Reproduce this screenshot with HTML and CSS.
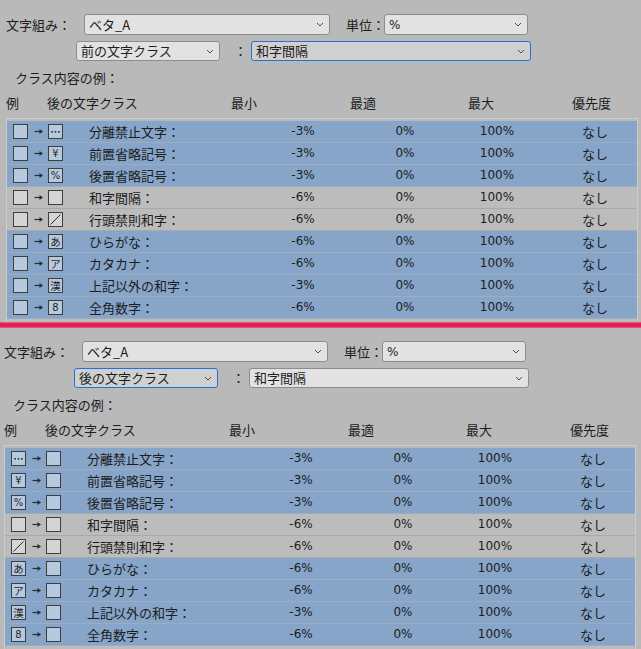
FILE: index.html
```html
<!DOCTYPE html>
<html lang="ja">
<head>
<meta charset="utf-8">
<link rel="stylesheet" href="styles.css">
</head>
<body>
<div class="panel panel-a">
  <div class="inner">
    <div class="form-row r1">
      <span class="lbl lbl-kumi">文字組み：</span>
      <div class="select s-kumi"><span>ベタ_A</span><svg class="chev" width="8" height="5" viewBox="0 0 8 5"><polyline points="1,1 4,4 7,1"/></svg></div>
      <span class="lbl lbl-unit">単位：</span>
      <div class="select s-unit"><span class="latin">%</span><svg class="chev" width="8" height="5" viewBox="0 0 8 5"><polyline points="1,1 4,4 7,1"/></svg></div>
    </div>
    <div class="form-row r2">
      <div class="select s-class"><span>前の文字クラス</span><svg class="chev" width="8" height="5" viewBox="0 0 8 5"><polyline points="1,1 4,4 7,1"/></svg></div>
      <span class="colon">：</span>
      <div class="select s-target focus"><span>和字間隔</span><svg class="chev" width="8" height="5" viewBox="0 0 8 5"><polyline points="1,1 4,4 7,1"/></svg></div>
    </div>
    <div class="caption">クラス内容の例：</div>
    <div class="thead">
      <span class="h h1">例</span><span class="h h2">後の文字クラス</span><span class="h h3">最小</span><span class="h h4">最適</span><span class="h h5">最大</span><span class="h h6">優先度</span>
    </div>
    <div class="table">
      <div class="row sel"><div class="ex"><span class="box"></span><svg class="arr" width="9" height="7" viewBox="0 0 9 7"><path d="M0.5 3.5H6"/><polygon points="5.5,1 9,3.5 5.5,6"/></svg><span class="box"><svg width="13" height="13" viewBox="0 0 13 13"><rect x="2.3" y="6" width="1.6" height="1.6"/><rect x="5.7" y="6" width="1.6" height="1.6"/><rect x="9.1" y="6" width="1.6" height="1.6"/></svg></span></div><span class="name">分離禁止文字：</span><span class="v min">-3%</span><span class="v opt">0%</span><span class="v max">100%</span><span class="v prio">なし</span></div>
      <div class="row sel"><div class="ex"><span class="box"></span><svg class="arr" width="9" height="7" viewBox="0 0 9 7"><path d="M0.5 3.5H6"/><polygon points="5.5,1 9,3.5 5.5,6"/></svg><span class="box g latin">¥</span></div><span class="name">前置省略記号：</span><span class="v min">-3%</span><span class="v opt">0%</span><span class="v max">100%</span><span class="v prio">なし</span></div>
      <div class="row sel"><div class="ex"><span class="box"></span><svg class="arr" width="9" height="7" viewBox="0 0 9 7"><path d="M0.5 3.5H6"/><polygon points="5.5,1 9,3.5 5.5,6"/></svg><span class="box g latin">%</span></div><span class="name">後置省略記号：</span><span class="v min">-3%</span><span class="v opt">0%</span><span class="v max">100%</span><span class="v prio">なし</span></div>
      <div class="row"><div class="ex"><span class="box"></span><svg class="arr" width="9" height="7" viewBox="0 0 9 7"><path d="M0.5 3.5H6"/><polygon points="5.5,1 9,3.5 5.5,6"/></svg><span class="box"></span></div><span class="name">和字間隔：</span><span class="v min">-6%</span><span class="v opt">0%</span><span class="v max">100%</span><span class="v prio">なし</span></div>
      <div class="row"><div class="ex"><span class="box"></span><svg class="arr" width="9" height="7" viewBox="0 0 9 7"><path d="M0.5 3.5H6"/><polygon points="5.5,1 9,3.5 5.5,6"/></svg><span class="box"><svg width="13" height="13" viewBox="0 0 13 13"><line class="sl" x1="1.5" y1="11.5" x2="11.5" y2="1.5"/></svg></span></div><span class="name">行頭禁則和字：</span><span class="v min">-6%</span><span class="v opt">0%</span><span class="v max">100%</span><span class="v prio">なし</span></div>
      <div class="row sel"><div class="ex"><span class="box"></span><svg class="arr" width="9" height="7" viewBox="0 0 9 7"><path d="M0.5 3.5H6"/><polygon points="5.5,1 9,3.5 5.5,6"/></svg><span class="box g">あ</span></div><span class="name">ひらがな：</span><span class="v min">-6%</span><span class="v opt">0%</span><span class="v max">100%</span><span class="v prio">なし</span></div>
      <div class="row sel"><div class="ex"><span class="box"></span><svg class="arr" width="9" height="7" viewBox="0 0 9 7"><path d="M0.5 3.5H6"/><polygon points="5.5,1 9,3.5 5.5,6"/></svg><span class="box g">ア</span></div><span class="name">カタカナ：</span><span class="v min">-6%</span><span class="v opt">0%</span><span class="v max">100%</span><span class="v prio">なし</span></div>
      <div class="row sel"><div class="ex"><span class="box"></span><svg class="arr" width="9" height="7" viewBox="0 0 9 7"><path d="M0.5 3.5H6"/><polygon points="5.5,1 9,3.5 5.5,6"/></svg><span class="box g">漢</span></div><span class="name">上記以外の和字：</span><span class="v min">-3%</span><span class="v opt">0%</span><span class="v max">100%</span><span class="v prio">なし</span></div>
      <div class="row sel"><div class="ex"><span class="box"></span><svg class="arr" width="9" height="7" viewBox="0 0 9 7"><path d="M0.5 3.5H6"/><polygon points="5.5,1 9,3.5 5.5,6"/></svg><span class="box g latin">8</span></div><span class="name">全角数字：</span><span class="v min">-6%</span><span class="v opt">0%</span><span class="v max">100%</span><span class="v prio">なし</span></div>
      <div class="row"><div class="ex"><span class="box"></span><svg class="arr" width="9" height="7" viewBox="0 0 9 7"><path d="M0.5 3.5H6"/><polygon points="5.5,1 9,3.5 5.5,6"/></svg><span class="box"></span></div></div>
    </div>
  </div>
</div>
<div class="divider"></div>
<div class="panel panel-b">
  <div class="inner">
    <div class="form-row r1">
      <span class="lbl lbl-kumi">文字組み：</span>
      <div class="select s-kumi"><span>ベタ_A</span><svg class="chev" width="8" height="5" viewBox="0 0 8 5"><polyline points="1,1 4,4 7,1"/></svg></div>
      <span class="lbl lbl-unit">単位：</span>
      <div class="select s-unit"><span class="latin">%</span><svg class="chev" width="8" height="5" viewBox="0 0 8 5"><polyline points="1,1 4,4 7,1"/></svg></div>
    </div>
    <div class="form-row r2">
      <div class="select s-class focus"><span>後の文字クラス</span><svg class="chev" width="8" height="5" viewBox="0 0 8 5"><polyline points="1,1 4,4 7,1"/></svg></div>
      <span class="colon">：</span>
      <div class="select s-target"><span>和字間隔</span><svg class="chev" width="8" height="5" viewBox="0 0 8 5"><polyline points="1,1 4,4 7,1"/></svg></div>
    </div>
    <div class="caption">クラス内容の例：</div>
    <div class="thead">
      <span class="h h1">例</span><span class="h h2">後の文字クラス</span><span class="h h3">最小</span><span class="h h4">最適</span><span class="h h5">最大</span><span class="h h6">優先度</span>
    </div>
    <div class="table">
      <div class="row sel"><div class="ex"><span class="box"><svg width="13" height="13" viewBox="0 0 13 13"><rect x="2.3" y="6" width="1.6" height="1.6"/><rect x="5.7" y="6" width="1.6" height="1.6"/><rect x="9.1" y="6" width="1.6" height="1.6"/></svg></span><svg class="arr" width="9" height="7" viewBox="0 0 9 7"><path d="M0.5 3.5H6"/><polygon points="5.5,1 9,3.5 5.5,6"/></svg><span class="box"></span></div><span class="name">分離禁止文字：</span><span class="v min">-3%</span><span class="v opt">0%</span><span class="v max">100%</span><span class="v prio">なし</span></div>
      <div class="row sel"><div class="ex"><span class="box g latin">¥</span><svg class="arr" width="9" height="7" viewBox="0 0 9 7"><path d="M0.5 3.5H6"/><polygon points="5.5,1 9,3.5 5.5,6"/></svg><span class="box"></span></div><span class="name">前置省略記号：</span><span class="v min">-3%</span><span class="v opt">0%</span><span class="v max">100%</span><span class="v prio">なし</span></div>
      <div class="row sel"><div class="ex"><span class="box g latin">%</span><svg class="arr" width="9" height="7" viewBox="0 0 9 7"><path d="M0.5 3.5H6"/><polygon points="5.5,1 9,3.5 5.5,6"/></svg><span class="box"></span></div><span class="name">後置省略記号：</span><span class="v min">-3%</span><span class="v opt">0%</span><span class="v max">100%</span><span class="v prio">なし</span></div>
      <div class="row"><div class="ex"><span class="box"></span><svg class="arr" width="9" height="7" viewBox="0 0 9 7"><path d="M0.5 3.5H6"/><polygon points="5.5,1 9,3.5 5.5,6"/></svg><span class="box"></span></div><span class="name">和字間隔：</span><span class="v min">-6%</span><span class="v opt">0%</span><span class="v max">100%</span><span class="v prio">なし</span></div>
      <div class="row"><div class="ex"><span class="box"><svg width="13" height="13" viewBox="0 0 13 13"><line class="sl" x1="1.5" y1="11.5" x2="11.5" y2="1.5"/></svg></span><svg class="arr" width="9" height="7" viewBox="0 0 9 7"><path d="M0.5 3.5H6"/><polygon points="5.5,1 9,3.5 5.5,6"/></svg><span class="box"></span></div><span class="name">行頭禁則和字：</span><span class="v min">-6%</span><span class="v opt">0%</span><span class="v max">100%</span><span class="v prio">なし</span></div>
      <div class="row sel"><div class="ex"><span class="box g">あ</span><svg class="arr" width="9" height="7" viewBox="0 0 9 7"><path d="M0.5 3.5H6"/><polygon points="5.5,1 9,3.5 5.5,6"/></svg><span class="box"></span></div><span class="name">ひらがな：</span><span class="v min">-6%</span><span class="v opt">0%</span><span class="v max">100%</span><span class="v prio">なし</span></div>
      <div class="row sel"><div class="ex"><span class="box g">ア</span><svg class="arr" width="9" height="7" viewBox="0 0 9 7"><path d="M0.5 3.5H6"/><polygon points="5.5,1 9,3.5 5.5,6"/></svg><span class="box"></span></div><span class="name">カタカナ：</span><span class="v min">-6%</span><span class="v opt">0%</span><span class="v max">100%</span><span class="v prio">なし</span></div>
      <div class="row sel"><div class="ex"><span class="box g">漢</span><svg class="arr" width="9" height="7" viewBox="0 0 9 7"><path d="M0.5 3.5H6"/><polygon points="5.5,1 9,3.5 5.5,6"/></svg><span class="box"></span></div><span class="name">上記以外の和字：</span><span class="v min">-3%</span><span class="v opt">0%</span><span class="v max">100%</span><span class="v prio">なし</span></div>
      <div class="row sel"><div class="ex"><span class="box g latin">8</span><svg class="arr" width="9" height="7" viewBox="0 0 9 7"><path d="M0.5 3.5H6"/><polygon points="5.5,1 9,3.5 5.5,6"/></svg><span class="box"></span></div><span class="name">全角数字：</span><span class="v min">-6%</span><span class="v opt">0%</span><span class="v max">100%</span><span class="v prio">なし</span></div>
      <div class="row"><div class="ex"><span class="box"></span><svg class="arr" width="9" height="7" viewBox="0 0 9 7"><path d="M0.5 3.5H6"/><polygon points="5.5,1 9,3.5 5.5,6"/></svg><span class="box"></span></div></div>
    </div>
  </div>
</div>
</body>
</html>
```

FILE: styles.css
```css
html, body {
  margin: 0;
  padding: 0;
  background: #b9b9b9;
  width: 641px;
  height: 649px;
  overflow: hidden;
}
body {
  font-family: "Noto Sans CJK JP", sans-serif;
  font-size: 13px;
  color: #1c1c1c;
}
.latin {
  font-family: "DejaVu Sans", "Noto Sans CJK JP", sans-serif;
  font-size: 12px;
}
.panel {
  width: 641px;
  overflow: hidden;
}
.panel-a {
  height: 322px;
}
.panel-b {
  height: 321px;
}
.panel-b .inner {
  margin-top: -1px;
  margin-left: -2px;
}
.inner {
  padding-top: 14px;
}
.form-row {
  display: flex;
  align-items: center;
}
.r1 {
  height: 21px;
}
.r2 {
  height: 20px;
  margin-top: 6px;
}
.lbl {
  line-height: 21px;
  white-space: nowrap;
  flex: none;
}
.lbl-kumi {
  padding-left: 6px;
  width: 84px;
  box-sizing: border-box;
}
.lbl-unit {
  margin-left: 16px;
  width: 38px;
}
.select {
  box-sizing: border-box;
  height: 100%;
  display: flex;
  align-items: center;
  justify-content: space-between;
  padding: 0 5px 0 4px;
  border: 1px solid #8d8d8d;
  border-radius: 3px;
  background: #e2e2e2;
  line-height: 18px;
  white-space: nowrap;
  flex: none;
}
.select.focus {
  border-color: #2273d9;
  background: #d0d0d0;
}
.chev {
  flex: none;
}
.chev polyline {
  fill: none;
  stroke: #4d4d4d;
  stroke-width: 1;
}
.s-kumi { width: 246px; }
.s-unit { width: 144px; }
.s-class { width: 144px; margin-left: 76px; }
.s-target { width: 280px; }
.colon {
  width: 13px;
  margin-left: 14px;
  margin-right: 4px;
  text-align: center;
  line-height: 20px;
  flex: none;
}
.caption {
  margin-top: 9px;
  padding-left: 15px;
  line-height: 16px;
  height: 16px;
}
.thead {
  margin-top: 9px;
  padding-left: 6px;
  display: flex;
  line-height: 16px;
  height: 16px;
  white-space: nowrap;
}
.h { flex: none; }
.h1 { width: 41px; }
.h2 { width: 184px; }
.h3 { width: 119px; }
.h4 { width: 118px; }
.h5 { width: 104px; }
.table {
  margin-top: 7px;
  margin-left: 6px;
  width: 632px;
  box-sizing: border-box;
  border: 1px solid #cbcbcb;
  border-bottom: none;
  padding-top: 2px;
}
.row {
  display: grid;
  grid-template-columns: 82px 164px 100px 104px 80px 100px;
  height: 22px;
  box-sizing: border-box;
  border-bottom: 1px solid #a9a9a9;
  background: #bcbcbc;
  line-height: 21px;
  white-space: nowrap;
}
.row.sel {
  background: #86a5c8;
  border-bottom-color: #9cadc0;
}
.ex {
  display: flex;
  align-items: center;
  padding-left: 6px;
  height: 21px;
}
.box {
  width: 15px;
  height: 15px;
  box-sizing: border-box;
  border: 1px solid #3e3e3e;
  background: #d5d5d5;
  display: flex;
  align-items: center;
  justify-content: center;
  flex: none;
}
.sel .box {
  background: #b6c9df;
}
.box svg rect {
  fill: #2b2b2b;
}
.box .sl {
  stroke: #2b2b2b;
  stroke-width: 1;
}
.box.g {
  font-size: 10.5px;
  line-height: 13px;
  color: #262626;
}
.box.g.latin {
  font-size: 10px;
}
.arr {
  margin: 0 5.5px;
  flex: none;
}
.arr path {
  stroke: #2b2b2b;
  stroke-width: 1.2;
  fill: none;
}
.arr polygon {
  fill: #2b2b2b;
}
.v {
  text-align: center;
  font-family: "DejaVu Sans", "Noto Sans CJK JP", sans-serif;
  font-size: 12px;
}
.v.prio {
  font-family: "Noto Sans CJK JP", sans-serif;
  font-size: 13px;
  padding-left: 16px;
}
.divider {
  height: 6px;
  background: linear-gradient(to bottom, #d86a86 0%, #e8194e 30%, #e8194e 70%, #dc6a88 100%);
}
```
